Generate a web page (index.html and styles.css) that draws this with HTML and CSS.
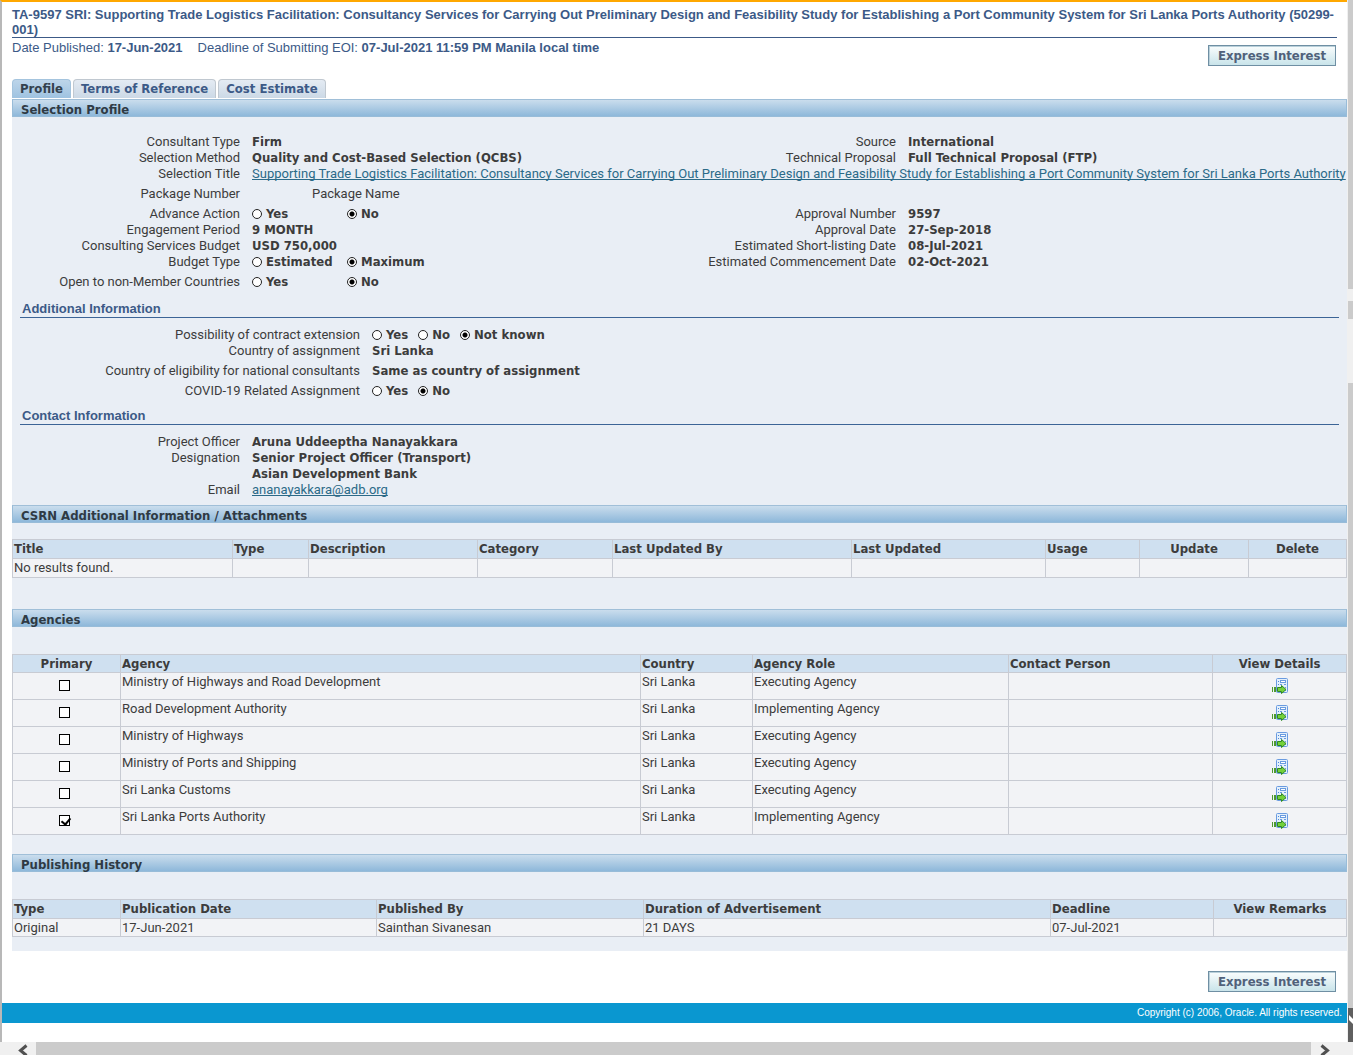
FILE: index.html
```html
<!DOCTYPE html>
<html lang="en">
<head>
<meta charset="utf-8">
<meta name="viewport" content="width=device-width, initial-scale=1">
<title>Selection Profile</title>
<link rel="stylesheet" href="styles.css">
</head>
<body>
<svg class="defs" aria-hidden="true">
  <symbol id="details" viewBox="0 0 16 16">
    <rect x="4.500" y="0.500" width="11" height="14" rx="1" fill="#e3effb" stroke="#6a9be0"/>
    <path d="M6 3.500h1M6 6.500h1" stroke="#4a86dc"/>
    <rect x="8.500" y="2.500" width="5" height="2" fill="#fff" stroke="#6a9be0"/>
    <path d="M8 6.500h2M12 6.500h2M13 9.500h1M13 12.500h1" stroke="#6a9be0"/>
    <path d="M0 9h1v5h-1zM2 9h2v5h-2z" fill="#4d9a2e"/>
    <path d="M5.500 9.500h4v-2l4.500 4-4.500 4v-2h-4z" fill="#74d13a" stroke="#2f8a22"/>
  </symbol>
</svg>
<div class="window">
  <div class="frame">
    <header class="top">
      <h1>TA-9597 SRI: Supporting Trade Logistics Facilitation: Consultancy Services for Carrying Out Preliminary Design and Feasibility Study for Establishing a Port Community System for Sri Lanka Ports Authority (50299-001)</h1>
      <div class="meta">
        <p class="dates"><span>Date Published: <b>17-Jun-2021</b></span><span>Deadline of Submitting EOI: <b>07-Jul-2021 11:59 PM Manila local time</b></span></p>
        <button class="action" type="button">Express Interest</button>
      </div>
    </header>

    <nav class="tabs">
      <a class="tab current" href="#profile">Profile</a>
      <a class="tab" href="#terms">Terms of Reference</a>
      <a class="tab" href="#cost">Cost Estimate</a>
    </nav>

    <main class="panel" id="profile">
      <h2 class="bar">Selection Profile</h2>
      <div class="fields first">
        <div class="row"><span class="label">Consultant Type</span><b>Firm</b><span class="label">Source</span><b>International</b></div>
        <div class="row"><span class="label">Selection Method</span><b>Quality and Cost-Based Selection (QCBS)</b><span class="label">Technical Proposal</span><b>Full Technical Proposal (FTP)</b></div>
        <div class="row"><span class="label">Selection Title</span><a class="wide" href="#title">Supporting Trade Logistics Facilitation: Consultancy Services for Carrying Out Preliminary Design and Feasibility Study for Establishing a Port Community System for Sri Lanka Ports Authority</a></div>
        <div class="row spaced"><span class="label">Package Number</span><span class="package">Package Name</span></div>
        <div class="row spaced"><span class="label">Advance Action</span><span class="options"><label><input type="radio" name="advance">Yes</label><label><input type="radio" name="advance" checked>No</label></span><span class="label">Approval Number</span><b>9597</b></div>
        <div class="row"><span class="label">Engagement Period</span><b>9 MONTH</b><span class="label">Approval Date</span><b>27-Sep-2018</b></div>
        <div class="row"><span class="label">Consulting Services Budget</span><b>USD 750,000</b><span class="label">Estimated Short-listing Date</span><b>08-Jul-2021</b></div>
        <div class="row"><span class="label">Budget Type</span><span class="options"><label><input type="radio" name="budget">Estimated</label><label><input type="radio" name="budget" checked>Maximum</label></span><span class="label">Estimated Commencement Date</span><b>02-Oct-2021</b></div>
        <div class="row spaced"><span class="label">Open to non-Member Countries</span><span class="options"><label><input type="radio" name="open">Yes</label><label><input type="radio" name="open" checked>No</label></span></div>
      </div>

      <h3>Additional Information</h3>
      <div class="fields indented">
        <div class="row"><span class="label">Possibility of contract extension</span><span class="options tight"><label><input type="radio" name="extension">Yes</label><label><input type="radio" name="extension">No</label><label><input type="radio" name="extension" checked>Not known</label></span></div>
        <div class="row"><span class="label">Country of assignment</span><b>Sri Lanka</b></div>
        <div class="row spaced"><span class="label">Country of eligibility for national consultants</span><b>Same as country of assignment</b></div>
        <div class="row spaced"><span class="label">COVID-19 Related Assignment</span><span class="options tight"><label><input type="radio" name="covid">Yes</label><label><input type="radio" name="covid" checked>No</label></span></div>
      </div>

      <h3>Contact Information</h3>
      <div class="fields">
        <div class="row"><span class="label">Project Officer</span><b>Aruna Uddeeptha Nanayakkara</b></div>
        <div class="row"><span class="label">Designation</span><b>Senior Project Officer (Transport)<br>Asian Development Bank</b></div>
        <div class="row"><span class="label">Email</span><a href="mailto:ananayakkara@adb.org">ananayakkara@adb.org</a></div>
      </div>

      <h2 class="bar after-fields">CSRN Additional Information / Attachments</h2>
      <table class="attachments">
        <colgroup><col><col><col><col><col><col><col><col><col></colgroup>
        <thead><tr><th>Title</th><th>Type</th><th>Description</th><th>Category</th><th>Last Updated By</th><th>Last Updated</th><th>Usage</th><th class="center">Update</th><th class="center">Delete</th></tr></thead>
        <tbody><tr><td>No results found.</td><td></td><td></td><td></td><td></td><td></td><td></td><td></td><td></td></tr></tbody>
      </table>

      <h2 class="bar after-table">Agencies</h2>
      <table class="agencies">
        <colgroup><col><col><col><col><col><col></colgroup>
        <thead><tr><th class="center">Primary</th><th>Agency</th><th>Country</th><th>Agency Role</th><th>Contact Person</th><th class="center">View Details</th></tr></thead>
        <tbody>
          <tr><td class="tick"><input type="checkbox" aria-label="Primary"></td><td>Ministry of Highways and Road Development</td><td>Sri Lanka</td><td>Executing Agency</td><td></td><td class="center"><a href="#a1" aria-label="View Details"><svg class="icon"><use href="#details"/></svg></a></td></tr>
          <tr><td class="tick"><input type="checkbox" aria-label="Primary"></td><td>Road Development Authority</td><td>Sri Lanka</td><td>Implementing Agency</td><td></td><td class="center"><a href="#a2" aria-label="View Details"><svg class="icon"><use href="#details"/></svg></a></td></tr>
          <tr><td class="tick"><input type="checkbox" aria-label="Primary"></td><td>Ministry of Highways</td><td>Sri Lanka</td><td>Executing Agency</td><td></td><td class="center"><a href="#a3" aria-label="View Details"><svg class="icon"><use href="#details"/></svg></a></td></tr>
          <tr><td class="tick"><input type="checkbox" aria-label="Primary"></td><td>Ministry of Ports and Shipping</td><td>Sri Lanka</td><td>Executing Agency</td><td></td><td class="center"><a href="#a4" aria-label="View Details"><svg class="icon"><use href="#details"/></svg></a></td></tr>
          <tr><td class="tick"><input type="checkbox" aria-label="Primary"></td><td>Sri Lanka Customs</td><td>Sri Lanka</td><td>Executing Agency</td><td></td><td class="center"><a href="#a5" aria-label="View Details"><svg class="icon"><use href="#details"/></svg></a></td></tr>
          <tr><td class="tick"><input type="checkbox" aria-label="Primary" checked></td><td>Sri Lanka Ports Authority</td><td>Sri Lanka</td><td>Implementing Agency</td><td></td><td class="center"><a href="#a6" aria-label="View Details"><svg class="icon"><use href="#details"/></svg></a></td></tr>
        </tbody>
      </table>

      <h2 class="bar after-rows">Publishing History</h2>
      <table class="history">
        <colgroup><col><col><col><col><col><col></colgroup>
        <thead><tr><th>Type</th><th>Publication Date</th><th>Published By</th><th>Duration of Advertisement</th><th>Deadline</th><th class="center">View Remarks</th></tr></thead>
        <tbody><tr><td>Original</td><td>17-Jun-2021</td><td>Sainthan Sivanesan</td><td>21 DAYS</td><td>07-Jul-2021</td><td></td></tr></tbody>
      </table>
    </main>

    <div class="bottom"><button class="action" type="button">Express Interest</button></div>
    <footer>Copyright (c) 2006, Oracle. All rights reserved.</footer>
  </div>

  <div class="scroll-y" aria-hidden="true">
    <span class="part upper"></span><span class="part notch"></span><span class="part lower"></span>
    <svg class="corner" viewBox="0 0 5 34"><rect width="5" height="34" fill="#5f5f5f"/><path d="M1 7l4 4v5l-4-4z" fill="#fff"/></svg>
  </div>
</div>
<div class="scroll-x" aria-hidden="true">
  <svg class="arrow" viewBox="0 0 36 13"><path d="M26.500 3.500l-6 5 6 5" fill="none" stroke="#505050" stroke-width="3"/></svg>
  <span class="thumb"></span>
  <svg class="arrow" viewBox="0 0 36 13"><path d="M4.500 3.500l6 5-6 5" fill="none" stroke="#505050" stroke-width="3"/></svg>
</div>
</body>
</html>
```
FILE: styles.css
```css
* { box-sizing: border-box; }

body {
  display: flex;
  flex-direction: column;
  min-height: 100vh;
  margin: 0;
  overflow-x: hidden;
  background: #fff;
  color: #3c3c3c;
  font: 13px/16px Roboto, sans-serif;
}

h1, h2, h3, p { margin: 0; }

b, th, .bar, .tab, .action, .options {
  font-family: "DejaVu Sans Condensed", "DejaVu Sans", sans-serif;
  font-weight: bold;
}

a { color: #2b6a88; text-decoration-thickness: 1px; text-underline-offset: 1px; text-decoration-skip-ink: none; }

.defs { position: absolute; width: 0; height: 0; }

.window { display: flex; flex: 1; }

.frame {
  flex: 1;
  min-width: 0;
  border-top: 2px solid #ffa800;
  border-left: 2px solid #b8b8b8;
}

/* Title and dates */
.top { padding: 5px 10px 0 10px; color: #3c5a87; font-family: "Liberation Sans", Arial, sans-serif; }
h1 { font-size: 13px; line-height: 15px; border-bottom: 1px solid #3c5a87; }
.meta { display: flex; justify-content: space-between; height: 28px; }
.dates { display: flex; gap: 15px; line-height: 19px; }
.dates b { font-family: inherit; }

.action {
  width: 128px;
  height: 21px;
  padding: 0;
  border: 1px solid #6f8fa3;
  box-shadow: inset 1px 1px #b9d0da;
  background: linear-gradient(#fafdfd, #c9e4ea);
  color: #50617a;
  font-size: 13px;
  line-height: 17px;
}
.meta .action { margin: 7px 1px 0 0; }

/* Tabs */
.tabs { display: flex; gap: 2px; padding: 13px 0 1px 10px; }
.tab {
  height: 19px;
  padding: 0 7px;
  border: 1px solid #c0c8d0;
  border-bottom: 0;
  border-radius: 4px 4px 0 0;
  background: linear-gradient(#e4ebf3, #ccd9e6);
  color: #3c5a87;
  line-height: 17px;
  text-decoration: none;
}
.tab.current { border-color: #a4c4de; background: linear-gradient(#bdd5ea, #9fc3e1); color: #34414d; }

/* Main panel */
.panel { margin-left: 10px; padding-bottom: 14px; background: #e9eef5; }
.bar {
  height: 18px;
  padding: 1px 0 0 8px;
  border: 1px solid #98bcd8;
  border-top-color: #a0bfd8;
  background: linear-gradient(#cadded, #8eb8da);
  color: #2f3a44;
  font-size: 13px;
  line-height: 17px;
}
.bar.after-fields { margin-top: 7px; }
.bar.after-table { margin-top: 31px; }
.bar.after-rows { margin-top: 19px; }

.fields { padding-top: 9px; }
.fields.first { padding-top: 17px; }
.row {
  display: grid;
  grid-template-columns: 228px minmax(0, 1fr) 193px minmax(0, 1fr);
  column-gap: 12px;
}
.indented .row { grid-template-columns: 348px minmax(0, 1fr); }
.row.spaced { margin-top: 4px; }
.label { text-align: right; }
.wide { grid-column: 2 / -1; white-space: nowrap; }
.package { padding-left: 60px; }

.options { display: flex; }
.options label { display: flex; align-items: center; gap: 4px; width: 95px; }
.options.tight { gap: 10px; }
.options.tight label { width: auto; }

h3 {
  margin: 11px 8px 0;
  padding-left: 2px;
  border-bottom: 1px solid #3c6496;
  color: #3c5a87;
  font: bold 13px/16px "Liberation Sans", Arial, sans-serif;
}
.indented + h3 { margin-top: 9px; }

input { appearance: none; margin: 0; border: 1px solid #222; background: #fff; }
input[type="radio"] { width: 10px; height: 10px; border-radius: 50%; }
input[type="radio"]:checked { background: radial-gradient(circle, #000 0 2px, #fff 3px); }
input[type="checkbox"] { display: block; position: relative; width: 11px; height: 11px; margin: 6px auto 0; border-color: #000; }
input[type="checkbox"]:checked::after {
  content: "";
  position: absolute;
  left: 3px;
  top: 0;
  width: 4px;
  height: 7px;
  border: solid #000;
  border-width: 0 2px 2px 0;
  transform: rotate(40deg);
}

/* Data tables */
table { width: 100%; border-collapse: collapse; table-layout: fixed; }
th, td { padding: 1px; border: 1px solid #c8cbd3; text-align: left; vertical-align: top; }
th { height: 19px; background: #cfe0f0; }
td { height: 19px; background: #f2f3f6; }
.center { text-align: center; }
.tick { padding-right: 5px; }
.attachments { margin-top: 16px; }
.agencies { margin-top: 27px; }
.agencies th { height: 18px; padding-bottom: 0; }
.agencies td { height: 27px; }
.history { margin-top: 27px; }
.history td { height: 18px; padding-bottom: 0; }
.icon { display: block; width: 16px; height: 16px; margin: 4px auto 0; }

.attachments col:nth-child(1) { width: 220px; }
.attachments col:nth-child(2) { width: 76px; }
.attachments col:nth-child(3) { width: 169px; }
.attachments col:nth-child(4) { width: 135px; }
.attachments col:nth-child(5) { width: 239px; }
.attachments col:nth-child(6) { width: 194px; }
.attachments col:nth-child(7) { width: 94px; }
.attachments col:nth-child(8) { width: 109px; }
.attachments col:nth-child(9) { width: 98px; }

.agencies col:nth-child(1) { width: 108px; }
.agencies col:nth-child(2) { width: 520px; }
.agencies col:nth-child(3) { width: 112px; }
.agencies col:nth-child(4) { width: 256px; }
.agencies col:nth-child(5) { width: 204px; }
.agencies col:nth-child(6) { width: 134px; }

.history col:nth-child(1) { width: 108px; }
.history col:nth-child(2) { width: 256px; }
.history col:nth-child(3) { width: 267px; }
.history col:nth-child(4) { width: 407px; }
.history col:nth-child(5) { width: 163px; }
.history col:nth-child(6) { width: 133px; }

/* Page end */
.bottom { display: flex; justify-content: flex-end; padding: 20px 11px 11px; }
footer {
  height: 20px;
  padding-right: 5px;
  background: #0a97d0;
  color: #fff;
  font: 10px/20px "Liberation Sans", Arial, sans-serif;
  text-align: right;
}

/* Scroll bars */
.scroll-y { display: flex; flex-direction: column; width: 6px; padding-left: 1px; background: #f0f0f0; }
.part { background: #cbcbcb; }
.upper { height: 289px; }
.notch { height: 18px; margin-top: 12px; }
.lower { flex: 1; margin-top: 64px; }
.corner { width: 5px; height: 34px; }
.scroll-x { display: flex; height: 13px; background: #f0f0f0; }
.thumb { flex: 1; margin-right: 6px; background: #cbcbcb; }
.arrow { width: 36px; height: 13px; }
```
